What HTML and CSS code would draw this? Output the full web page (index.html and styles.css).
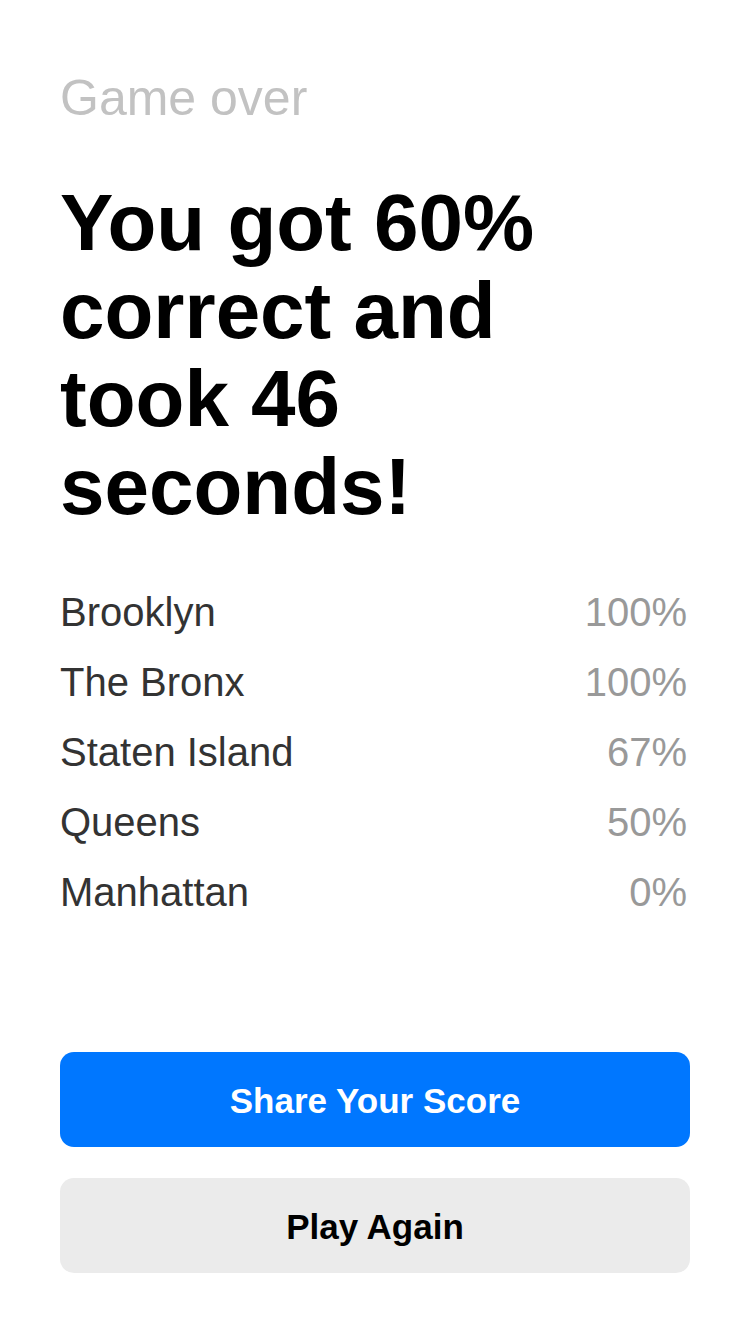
FILE: index.html
```html
<!DOCTYPE html>
<html lang="en">
<head>
<meta charset="utf-8">
<title>Game over</title>
<link rel="stylesheet" href="styles.css">
</head>
<body>
<main class="screen">
  <p class="eyebrow">Game over</p>
  <h1 class="headline">You got 60% correct and took 46 seconds!</h1>
  <ul class="scores">
    <li class="score-row"><span class="borough">Brooklyn</span><span class="pct">100%</span></li>
    <li class="score-row"><span class="borough">The Bronx</span><span class="pct">100%</span></li>
    <li class="score-row"><span class="borough">Staten Island</span><span class="pct">67%</span></li>
    <li class="score-row"><span class="borough">Queens</span><span class="pct">50%</span></li>
    <li class="score-row"><span class="borough">Manhattan</span><span class="pct">0%</span></li>
  </ul>
  <div class="actions">
    <button class="btn btn-primary" type="button">Share Your Score</button>
    <button class="btn btn-secondary" type="button">Play Again</button>
  </div>
</main>
</body>
</html>
```

FILE: styles.css
```css
* { box-sizing: border-box; }
html, body {
  margin: 0;
  padding: 0;
  background: #ffffff;
}
body {
  font-family: "Liberation Sans", Arial, Helvetica, sans-serif;
  -webkit-font-smoothing: antialiased;
}
.screen {
  min-height: 1334px;
  padding: 68px 60px 61px;
  display: flex;
  flex-direction: column;
}
.eyebrow {
  margin: 0;
  font-size: 50px;
  line-height: 60px;
  color: #c2c2c2;
  font-weight: 400;
}
.headline {
  margin: 51px 0 0;
  max-width: 600px;
  font-size: 80px;
  line-height: 88px;
  font-weight: 700;
  color: #000000;
}
.scores {
  list-style: none;
  margin: 46px 0 0;
  padding: 0;
}
.score-row {
  display: flex;
  justify-content: space-between;
  align-items: center;
  font-size: 40px;
  line-height: 70px;
}
.borough { color: #333333; }
.pct { color: #999999; padding-right: 3px; }
.actions {
  margin-top: auto;
  display: flex;
  flex-direction: column;
  gap: 31px;
}
.btn {
  display: block;
  width: 100%;
  height: 95px;
  padding: 2px 0 0;
  border: none;
  border-radius: 14px;
  font-family: "Liberation Sans", Arial, Helvetica, sans-serif;
  font-size: 35px;
  font-weight: 700;
  cursor: pointer;
}
.btn-primary {
  background: #0077ff;
  color: #ffffff;
}
.btn-secondary {
  background: #ebebeb;
  color: #000000;
}
```
